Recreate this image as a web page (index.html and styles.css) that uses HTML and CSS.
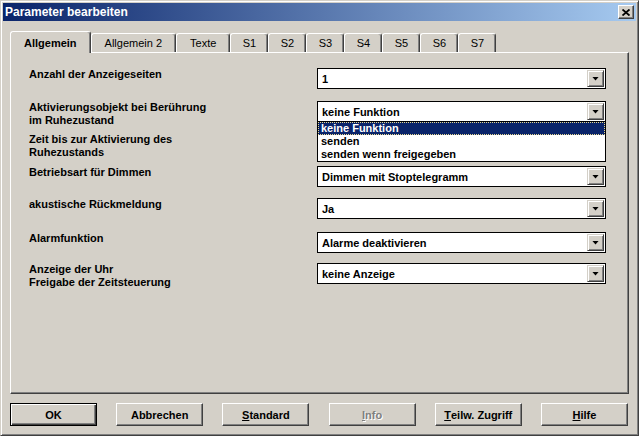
FILE: index.html
```html
<!DOCTYPE html>
<html lang="de">
<head>
  <meta charset="UTF-8">
  <title>Parameter bearbeiten</title>
  <link rel="stylesheet" href="styles.css">
</head>
<body>

  <div class="window">
    <div class="titlebar">
      <span class="title">Parameter bearbeiten</span>
      <span class="close">
        <svg width="8" height="7" viewBox="0 0 8 7"><path d="M0.5 0.5l7 6M7.5 0.5l-7 6" stroke="#000" stroke-width="1.8" fill="none"/></svg>
      </span>
    </div>

    <div class="content">
      <div class="tabs">
        <div class="tab active">Allgemein</div>
        <div class="tab">Allgemein 2</div>
        <div class="tab">Texte</div>
        <div class="tab short">S1</div>
        <div class="tab short">S2</div>
        <div class="tab short">S3</div>
        <div class="tab short">S4</div>
        <div class="tab short">S5</div>
        <div class="tab short">S6</div>
        <div class="tab short">S7</div>
      </div>

      <div class="panel">
        <div class="form">
          <div class="label">Anzahl der Anzeigeseiten</div>
          <div class="combo"><span class="value">1</span><span class="arrow"></span></div>

          <div class="label">Aktivierungsobjekt bei Berührung<br>im Ruhezustand</div>
          <div class="combo open">
            <span class="value">keine Funktion</span><span class="arrow"></span>
            <!-- opened list of the combo box -->
            <div class="dropdown">
              <div class="option selected">keine Funktion</div>
              <div class="option">senden</div>
              <div class="option">senden wenn freigegeben</div>
            </div>
          </div>

          <div class="label">Zeit bis zur Aktivierung des<br>Ruhezustands</div>
          <div class="combo"><span class="value"></span><span class="arrow"></span></div>

          <div class="label">Betriebsart für Dimmen</div>
          <div class="combo"><span class="value">Dimmen mit Stoptelegramm</span><span class="arrow"></span></div>

          <div class="label">akustische Rückmeldung</div>
          <div class="combo"><span class="value">Ja</span><span class="arrow"></span></div>

          <div class="label">Alarmfunktion</div>
          <div class="combo"><span class="value">Alarme deaktivieren</span><span class="arrow"></span></div>

          <div class="label">Anzeige der Uhr<br>Freigabe der Zeitsteuerung</div>
          <div class="combo"><span class="value">keine Anzeige</span><span class="arrow"></span></div>
        </div>
      </div>

      <div class="buttons">
        <div class="btn default">OK</div>
        <div class="btn">Abbrechen</div>
        <div class="btn"><u>S</u>tandard</div>
        <div class="btn disabled"><u>I</u>nfo</div>
        <div class="btn"><u>T</u>eilw. Zugriff</div>
        <div class="btn"><u>H</u>ilfe</div>
      </div>
    </div>
  </div>

</body>
</html>
```

FILE: styles.css
```css
body { margin: 0; background-color: #d4d0c8; font-family: "Liberation Sans", Arial, sans-serif; font-size: 11px; color: #000; }

.window {
  width: 639px;
  height: 436px;
  box-sizing: border-box;
  padding: 2px;
  background-color: #d4d0c8;
  border: 1px solid;
  border-color: #d4d0c8 #404040 #404040 #d4d0c8;
  box-shadow: inset 1px 1px #fff, inset -1px -1px #808080;
}

.titlebar {
  height: 18px;
  display: flex;
  align-items: center;
  justify-content: space-between;
  padding-left: 2px;
  background: linear-gradient(to right, #0a246a, #a6caf0);
}
.title { color: #fff; font-size: 12px; font-weight: bold; line-height: 18px; }
.close {
  width: 16px;
  height: 14px;
  margin-right: 2px;
  box-sizing: border-box;
  display: flex;
  align-items: center;
  justify-content: center;
  background-color: #d4d0c8;
  border: 1px solid;
  border-color: #fff #404040 #404040 #fff;
  box-shadow: inset -1px -1px #808080;
}

.content { padding: 0 7px; }

.tabs {
  display: flex;
  align-items: flex-end;
  height: 21px;
  margin-top: 10px;
}
.tab {
  height: 19px;
  box-sizing: border-box;
  padding: 3px 13px 0;
  line-height: 13px;
  white-space: nowrap;
  border: 1px solid;
  border-bottom: none;
  border-color: #fff #404040 transparent #fff;
  border-radius: 3px 3px 0 0;
  box-shadow: inset -1px 0 #808080;
}
.tab.short { width: 38px; padding-left: 0; padding-right: 0; text-align: center; }
.tab.active {
  position: relative;
  z-index: 1;
  height: 22px;
  margin-bottom: -1px;
  padding-top: 5px;
  font-weight: bold;
  background-color: #d4d0c8;
}

.panel {
  height: 342px;
  box-sizing: border-box;
  padding: 15px 18px;
  border: 1px solid;
  border-color: #fff #404040 #404040 #fff;
  box-shadow: inset -1px -1px #808080;
}

.form {
  display: grid;
  grid-template-columns: 288px 289px;
  grid-template-rows: 33px 32px 33px 32px 34px 31px;
  font-weight: bold;
}
.label { grid-column: 1; line-height: 13px; }

.combo {
  grid-column: 2;
  position: relative;
  height: 21px;
  box-sizing: border-box;
  display: flex;
  align-items: center;
  border: 1px solid #000;
  background-color: #fff;
}
.combo .value { flex: 1; padding-left: 4px; white-space: nowrap; }
.arrow {
  width: 17px;
  height: 17px;
  margin: 1px 1px 1px 0;
  box-sizing: border-box;
  display: flex;
  align-items: center;
  justify-content: center;
  background-color: #d4d0c8;
  border: 1px solid;
  border-color: #d4d0c8 #404040 #404040 #d4d0c8;
  box-shadow: inset 1px 1px #fff, inset -1px -1px #808080;
}
.arrow::after {
  content: "";
  width: 7px;
  height: 4px;
  background-color: #000;
  clip-path: polygon(0 0, 100% 0, 50% 100%);
}

.dropdown {
  position: absolute;
  z-index: 2;
  top: 19px;
  left: -1px;
  right: -1px;
  height: 41px;
  box-sizing: border-box;
  border: 1px solid #000;
  background-color: #fff;
}
.option { height: 13px; line-height: 13px; padding-left: 3px; }
.option.selected {
  box-sizing: border-box;
  padding-left: 2px;
  line-height: 11px;
  color: #fff;
  background-color: #0a246a;
  border: 1px dotted #e8d890;
}

.buttons {
  display: flex;
  justify-content: space-between;
  margin: 9px 1px 0 0;
}
.btn {
  width: 87px;
  height: 23px;
  box-sizing: border-box;
  display: flex;
  align-items: center;
  justify-content: center;
  font-weight: bold;
  background-color: #d4d0c8;
  border: 1px solid;
  border-color: #fff #404040 #404040 #fff;
  box-shadow: inset -1px -1px #808080;
}
.btn.default {
  border-color: #000;
  box-shadow: inset 1px 1px #fff, inset -1px -1px #404040, inset -2px -2px #808080;
}
.btn.disabled { color: #808080; text-shadow: 1px 1px #fff; }
```
